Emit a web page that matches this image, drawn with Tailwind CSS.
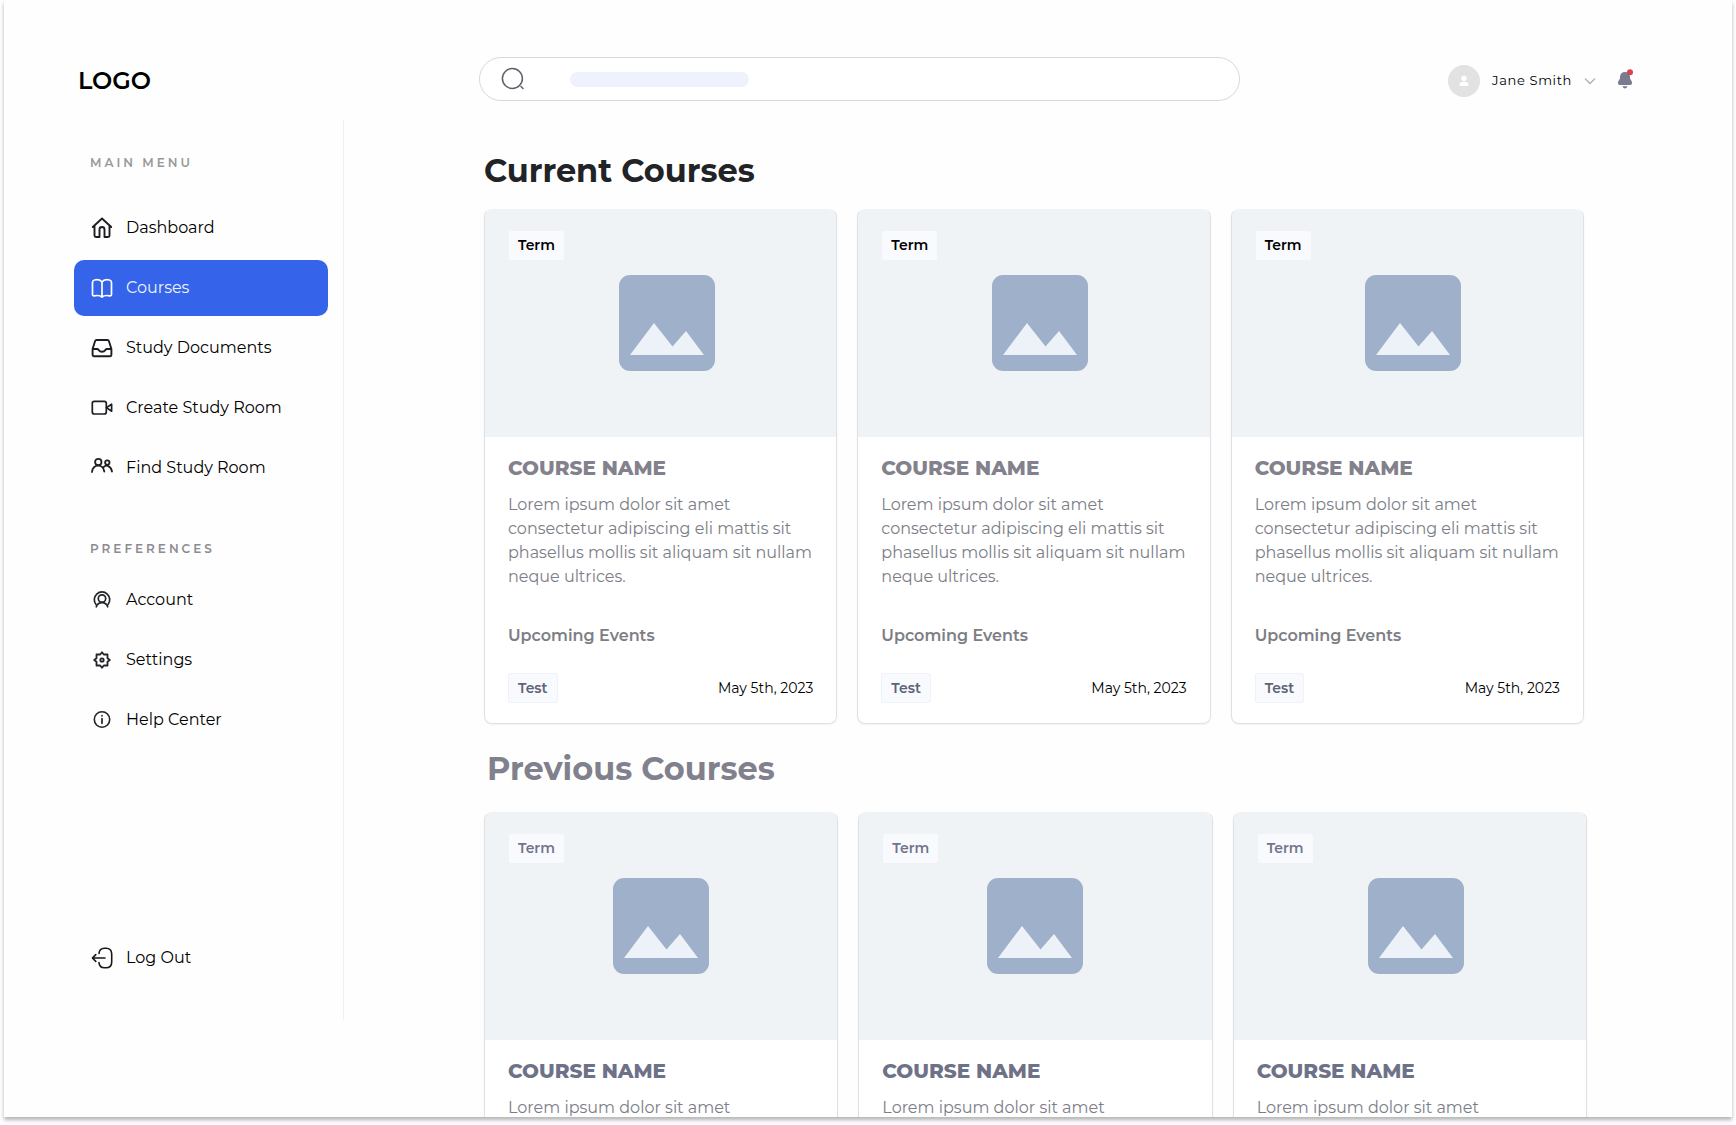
<!DOCTYPE html>
<html lang="en">
<head>
<meta charset="utf-8">
<meta name="viewport" content="width=device-width, initial-scale=1">
<title>Courses</title>
<script src="https://cdn.jsdelivr.net/npm/@tailwindcss/browser@4"></script>
</head>
<body class="h-screen overflow-hidden bg-white px-1 pb-2 font-['Montserrat','Inter',sans-serif] text-black">

<svg class="hidden" aria-hidden="true">
  <symbol id="picture" viewBox="0 0 96 96">
    <rect width="96" height="96" rx="11" fill="#9fb0ca"/>
    <path d="M11 80 35 48 53.500 71.500 67 56 85 80Z" fill="#edf2f8"/>
  </symbol>
</svg>

<div class="flex h-full overflow-hidden bg-[#fefefe] shadow-[0_3px_4px_rgba(0,0,0,0.3)]">

  <aside class="flex w-[340px] shrink-0 flex-col">
    <div class="flex h-[120px] items-end pb-[23px] pl-[74px]">
      <a href="#" class="text-2xl leading-8 font-semibold">LOGO</a>
    </div>
    <nav class="mb-[97px] flex flex-1 flex-col border-r border-[#f0f0f0] pt-[34px] pr-[15px] pl-[70px]">
      <h2 class="pl-4 text-xs leading-[18px] font-semibold tracking-[3px] text-[#999]">MAIN MENU</h2>
      <ul class="mt-7 flex flex-col gap-1">
        <li><a href="#" class="flex h-14 items-center gap-3 rounded-[10px] pl-4">
          <svg class="size-6" viewBox="0 0 24 24" fill="none" stroke="#1c1e22" stroke-width="1.900" stroke-linecap="round" stroke-linejoin="round"><path d="M2.800 11 12 2.500 21.200 11M4.500 9.500V19.500a1.500 1.500 0 0 0 1.500 1.500H9.500V13.500a2.500 2.500 0 0 1 5 0V21H18a1.500 1.500 0 0 0 1.500-1.500V9.500"/></svg>
          Dashboard</a></li>
        <li><a href="#" aria-current="page" class="flex h-14 items-center gap-3 rounded-[10px] bg-[#3563e9] pl-4 text-[#eef3ff]">
          <svg class="size-6" viewBox="0 0 24 24" fill="none" stroke="#fff" stroke-width="1.700" stroke-linecap="round" stroke-linejoin="round"><path d="M12 6C10.500 3.700 7 3.400 4.500 4 3.200 4.300 2.500 5.200 2.500 6.500V18.500C2.500 19.600 3.300 20 4.300 19.800 7 19.300 10 19.300 12 21 14 19.300 17 19.300 19.700 19.800 20.700 20 21.500 19.600 21.500 18.500V6.500C21.500 5.200 20.800 4.300 19.500 4 17 3.400 13.500 3.700 12 6ZM12 6V20.500"/></svg>
          Courses</a></li>
        <li><a href="#" class="flex h-14 items-center gap-3 rounded-[10px] pl-4">
          <svg class="size-6" viewBox="0 0 24 24" fill="none" stroke="#1c1e22" stroke-width="1.900" stroke-linecap="round" stroke-linejoin="round"><path d="M2.600 13 5 5.200C5.300 4.300 5.800 4 6.500 4H17.500C18.200 4 18.700 4.300 19 5.200L21.400 13V19C21.400 19.800 21 20.200 20.200 20.200H3.800C3 20.200 2.600 19.800 2.600 19ZM2.600 13H7.500C8.500 13 8.800 15.800 12 15.800S15.500 13 16.500 13H21.400"/></svg>
          Study Documents</a></li>
        <li><a href="#" class="flex h-14 items-center gap-3 rounded-[10px] pl-4">
          <svg class="size-6" viewBox="0 0 24 24" fill="none" stroke="#1c1e22" stroke-width="1.700" stroke-linecap="round" stroke-linejoin="round"><rect x="2.300" y="5.300" width="14" height="12.700" rx="2"/><path d="M16.500 11.600 21.600 8.200V15.200Z"/></svg>
          Create Study Room</a></li>
        <li><a href="#" class="flex h-14 items-center gap-3 rounded-[10px] pl-4">
          <svg class="size-6" viewBox="0 0 24 24" fill="none" stroke="#1c1e22" stroke-width="1.800" stroke-linecap="round"><circle cx="8.300" cy="6" r="3.200"/><path d="M2 16C2.500 12 5 9.700 8.300 9.700 11.500 9.700 13.700 12 14.300 15.500"/><circle cx="17.300" cy="6.600" r="2.200"/><path d="M13.600 11.200C16 8.400 21 9.500 22 15.500"/></svg>
          Find Study Room</a></li>
      </ul>
      <h2 class="mt-11 pl-4 text-xs leading-[18px] font-semibold tracking-[3px] text-[#8c8c90]">PREFERENCES</h2>
      <ul class="mt-[14px] flex flex-col gap-1">
        <li><a href="#" class="flex h-14 items-center gap-3 rounded-[10px] pl-4">
          <svg class="size-6" viewBox="0 0 24 24" fill="none" stroke="#222428" stroke-width="1.700" stroke-linecap="round"><path d="M6 16.500A7.700 7.700 0 1 1 18 16.500"/><circle cx="12" cy="10.500" r="3.700"/><path d="M6.300 18.800C8 13.300 16 13.300 17.700 18.800"/></svg>
          Account</a></li>
        <li><a href="#" class="flex h-14 items-center gap-3 rounded-[10px] pl-4">
          <svg class="size-6" viewBox="0 0 24 24" fill="none" stroke="#222428" stroke-width="1.800" stroke-linejoin="round"><path d="M12 4.200 13.800 6.500 17.500 6.500 17.500 10.200 19.800 12 17.500 13.800 17.500 17.500 13.800 17.500 12 19.800 10.200 17.500 6.500 17.500 6.500 13.800 4.200 12 6.500 10.200 6.500 6.500 10.200 6.500Z"/><circle cx="12" cy="12" r="1.700"/></svg>
          Settings</a></li>
        <li><a href="#" class="flex h-14 items-center gap-3 rounded-[10px] pl-4">
          <svg class="size-6" viewBox="0 0 24 24" fill="none" stroke="#222428" stroke-width="1.600" stroke-linecap="round"><circle cx="12" cy="11.500" r="7.700"/><path d="M12 10.700V15.300M12 7.700V7.800" stroke-width="1.700"/></svg>
          Help Center</a></li>
      </ul>
      <a href="#" class="mt-auto mb-[34px] flex h-14 items-center gap-3 rounded-[10px] pl-4">
        <svg class="size-6" viewBox="0 0 24 24" fill="none" stroke="#16181b" stroke-width="1.600" stroke-linecap="round" stroke-linejoin="round"><path d="M9 7.500C9.300 3.500 11 2.200 14.500 2.200H16C20 2.200 21.700 4 21.700 8V16C21.700 20 20 21.800 16 21.800H14.500C11 21.800 9.300 20.500 9 16.600M15 12H2.600M5.800 8.600 2.400 12 5.800 15.400"/></svg>
        Log Out</a>
    </nav>
  </aside>

  <main class="min-w-0 flex-1 overflow-y-auto pt-[57px] pl-[135px] [scrollbar-width:none]">
    <header class="mr-[97px] flex items-center">
      <form class="flex h-11 flex-1 items-center rounded-full border border-[#d4dadd] bg-white pl-5" role="search">
        <svg class="size-6 shrink-0" viewBox="0 0 24 24" fill="none" stroke="#5d6068" stroke-width="1.500" stroke-linecap="round"><circle cx="12.400" cy="11.500" r="10"/><path d="M21 19.500 23 21.500"/></svg>
        <span class="ml-[46px] h-[15px] w-[179px] shrink-0 rounded-full bg-[#edf2fd]"></span>
        <input type="search" aria-label="Search" class="h-full min-w-0 flex-1 rounded-r-full bg-transparent px-3 outline-none">
      </form>
      <button type="button" class="ml-[208px] flex shrink-0 items-center pt-[3px] text-[13px] tracking-wider">
        <svg class="size-8" viewBox="0 0 32 32"><circle cx="16" cy="16" r="16" fill="#e2e2e2"/><circle cx="16" cy="13.500" r="2.700" fill="#fff"/><path d="M11.500 20C11.500 17.500 13 17 16 17S20.500 17.500 20.500 20C20.500 21 20 21 19 21H13C12 21 11.500 21 11.500 20Z" fill="#fff"/></svg>
        <span class="ml-3">Jane Smith</span>
        <svg class="ml-3 size-3" viewBox="0 0 12 12" fill="none" stroke="#b3b5ba" stroke-width="1.500" stroke-linecap="round" stroke-linejoin="round"><path d="M1.500 4 6 8.500 10.500 4"/></svg>
      </button>
      <button type="button" aria-label="Notifications" class="ml-[21px]">
        <svg class="h-5 w-[18px]" viewBox="0 0 18 20"><path d="M8 3C4.800 3 3 5 3 8V9.500L1.200 12.500C.500 14.500 1.300 16 3 16H13C14.700 16 15.500 14.500 14.800 12.500L13 9.500V8C13 5 11.200 3 8 3Z" fill="#787c8e"/><path d="M5.500 17.300H10.500C10 19 9 19.400 8 19.400S6 19 5.500 17.300Z" fill="#787c8e"/><circle cx="13" cy="3.200" r="3" fill="#d9434c"/></svg>
      </button>
    </header>

    <section class="mt-[50px] pl-[5px]">
      <h1 class="text-[32px] leading-10 font-bold text-[#212326]">Current Courses</h1>
      <div id="current" class="mt-[18px] mr-[148px] grid grid-cols-3 gap-5"></div>
    </section>

    <section class="mt-[25px] pl-[5px]">
      <h1 class="pl-[3px] text-[32px] leading-10 font-bold text-[#81818e]">Previous Courses</h1>
      <div id="previous" class="mt-[23px] mr-[145px] grid grid-cols-3 gap-5"></div>
    </section>
  </main>
</div>

<script>
  const styles = {
    current: { term: 'text-black', name: 'text-[#83818c]', pictures: ['pl-3', 'pl-3', 'pl-3'] },
    previous: { term: 'text-[#71758a]', name: 'text-[#6e7288]', pictures: ['', '', 'pl-3'] }
  };
  const card = (s, picture) => `
    <article class="overflow-hidden rounded-lg border border-[#dfe1e4] border-t-[#eff2f5] bg-white shadow-xs">
      <div class="relative flex h-[227px] items-center justify-center bg-[#f0f3f6] pb-0.5 ${picture}">
        <span class="absolute top-[21px] left-6 rounded-xs bg-[#f9fafe] px-[9px] text-sm leading-[29px] font-semibold ${s.term}">Term</span>
        <svg class="size-24" role="img" aria-label="Course picture"><use href="#picture"/></svg>
      </div>
      <div class="px-[23px] pt-[17px] pb-5">
        <h2 class="text-xl leading-7 font-extrabold ${s.name}">COURSE NAME</h2>
        <p class="mt-[11px] text-base leading-6 whitespace-nowrap text-[#7b7e86]">Lorem ipsum dolor sit amet<br>consectetur adipiscing eli mattis sit<br>phasellus mollis sit aliquam sit nullam<br>neque ultrices.</p>
        <h3 class="mt-[35px] text-base leading-6 font-semibold text-[#7d7e84]">Upcoming Events</h3>
        <div class="mt-[25px] flex h-[30px] items-center justify-between text-sm">
          <span class="rounded-xs border border-[#eff2f8] bg-[#f9fafe] px-[9px] leading-7 font-semibold text-[#5d6478]">Test</span>
          <time datetime="2023-05-05">May 5th, 2023</time>
        </div>
      </div>
    </article>`;
  for (const id of ['current', 'previous'])
    document.getElementById(id).innerHTML = styles[id].pictures.map(p => card(styles[id], p)).join('');
</script>
</body>
</html>
